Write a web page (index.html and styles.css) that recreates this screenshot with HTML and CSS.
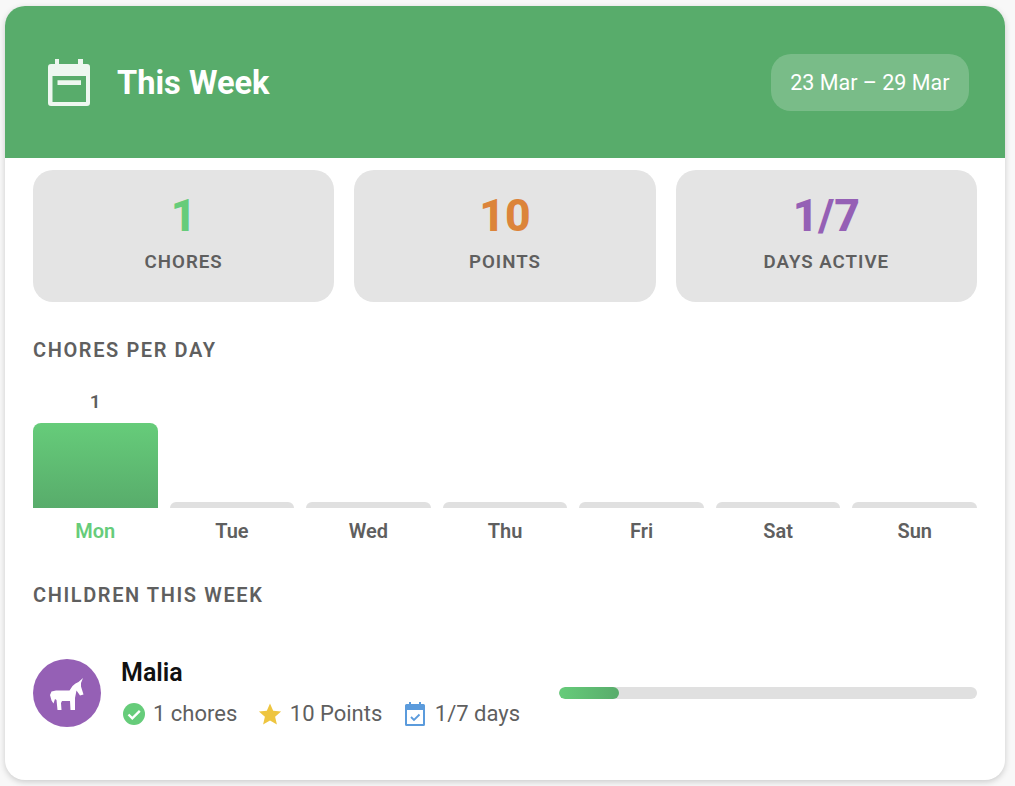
FILE: index.html
```html
<!DOCTYPE html>
<html lang="en">
<head>
<meta charset="utf-8">
<title>This Week</title>
<link rel="stylesheet" href="styles.css">
</head>
<body>
<main class="card">
  <header class="head">
    <div class="head-left">
      <svg class="head-icon" viewBox="0 0 42 47"><path fill="currentColor" fill-rule="evenodd" d="M7 0h4v5h19V0h5v5h4a3 3 0 0 1 3 3v36a3 3 0 0 1-3 3H3a3 3 0 0 1-3-3V8a3 3 0 0 1 3-3h4zM4.500 17v26h33.500V17zM9.500 21.300H33V26H9.500z"/></svg>
      <h1 class="title">This Week</h1>
    </div>
    <div class="range">23 Mar – 29 Mar</div>
  </header>
  <div class="body">
    <section class="stats">
      <div class="stat"><div class="stat-num green">1</div><div class="stat-label">CHORES</div></div>
      <div class="stat"><div class="stat-num orange">10</div><div class="stat-label">POINTS</div></div>
      <div class="stat"><div class="stat-num purple">1/7</div><div class="stat-label">DAYS ACTIVE</div></div>
    </section>
    <h2 class="section-title">CHORES PER DAY</h2>
    <section class="chart">
      <div class="day"><div class="count">1</div><div class="bar bar-on"></div><div class="day-name today">Mon</div></div>
      <div class="day"><div class="bar"></div><div class="day-name">Tue</div></div>
      <div class="day"><div class="bar"></div><div class="day-name">Wed</div></div>
      <div class="day"><div class="bar"></div><div class="day-name">Thu</div></div>
      <div class="day"><div class="bar"></div><div class="day-name">Fri</div></div>
      <div class="day"><div class="bar"></div><div class="day-name">Sat</div></div>
      <div class="day"><div class="bar"></div><div class="day-name">Sun</div></div>
    </section>
    <h2 class="section-title second">CHILDREN THIS WEEK</h2>
    <section class="child">
      <div class="avatar">
        <svg viewBox="0 0 34 32" class="unicorn"><path fill="#fff" d="M33 0 31 5V8.500L33.500 16.500 30 17.500 26.500 12.500 26 15 25 20V32H20.500L20 23H12L11 25 11.500 32H7.500L6.500 22 5 21 3.500 25.500 1.500 22.500 0 17 1.500 13.500 6 12.500H19.500L22.500 8 25.500 5.500 28.500 4z"/></svg>
      </div>
      <div class="child-info">
        <div class="child-name">Malia</div>
        <div class="meta">
          <span class="meta-item">
            <svg class="meta-icon" viewBox="0 0 24 24"><circle cx="12" cy="12" r="11" fill="#66cc7a"/><path d="M6.500 12.500l3.800 3.800 7.500-7.500" fill="none" stroke="#fff" stroke-width="2.400"/></svg>
            1 chores
          </span>
          <span class="meta-item">
            <svg class="meta-icon" viewBox="0 0 24 24"><path fill="#eec540" d="M12 1.500l3.200 7.300 7.900.7-6 5.200 1.800 7.800L12 18.400l-6.900 4.100 1.800-7.800-6-5.200 7.900-.7z"/></svg>
            10 Points
          </span>
          <span class="meta-item">
            <svg class="meta-icon" viewBox="0 0 24 24"><path fill="#5b9bdc" fill-rule="evenodd" d="M6 0h2v2h8V0h2v2h2.500A1.500 1.500 0 0 1 22 3.500v19a1.500 1.500 0 0 1-1.500 1.500h-17A1.500 1.500 0 0 1 2 22.500v-19A1.500 1.500 0 0 1 3.500 2H6zM4 8v14h16V8z"/><path d="M8 15l3 3 5.500-5.500" fill="none" stroke="#5b9bdc" stroke-width="1.800"/></svg>
            1/7 days
          </span>
        </div>
      </div>
      <div class="track"><div class="fill" style="width:14.300%"></div></div>
    </section>
  </div>
</main>
</body>
</html>
```
FILE: styles.css
```css
* { box-sizing: border-box; }
html, body { margin: 0; height: 100%; }
body {
  background: #f8f8f8;
  font-family: Roboto, "Liberation Sans", sans-serif;
  padding: 6px 10px 0 5px;
  overflow: hidden;
}
.card {
  height: 774px;
  background: #fff;
  border-radius: 20px;
  overflow: hidden;
  box-shadow: 0 2px 6px rgba(0,0,0,.18);
}
.head {
  height: 152px;
  background: #58ac6b;
  color: #fff;
  display: flex;
  align-items: center;
  justify-content: space-between;
  padding: 0 36px 0 43px;
}
.head-left { display: flex; align-items: center; gap: 27px; }
.head-icon { width: 42px; height: 47px; color: #eef7f0; display: block; }
.title { margin: 0; padding-top: 2px; font-size: 32.600px; font-weight: 700; line-height: 38px; }
.range {
  height: 57px;
  display: flex;
  align-items: center;
  padding: 0 19.500px;
  border-radius: 20px;
  background: rgba(255,255,255,.2);
  font-size: 21.500px;
}
.body { padding: 12px 28px 0; }
.stats { display: grid; grid-template-columns: repeat(3, 1fr); gap: 20px; }
.stat {
  height: 132px;
  background: #e4e4e4;
  border-radius: 20px;
  display: flex;
  flex-direction: column;
  align-items: center;
  padding-top: 19px;
}
.stat-num { font-size: 44.500px; font-weight: 800; line-height: 54px; }
.green { color: #66cc7a; }
.orange { color: #dc843a; }
.purple { color: #9560b5; }
.stat-label { font-size: 18.700px; font-weight: 600; letter-spacing: 1px; color: #5f5f5f; line-height: 24px; margin-top: 7px; }
.section-title { margin: 0; font-size: 20px; font-weight: 600; letter-spacing: 1.600px; color: #5f5f5f; line-height: 24px; }
.stats + .section-title { margin-top: 36px; }
.chart { display: grid; grid-template-columns: repeat(7, 1fr); gap: 12px; height: 158px; align-items: end; margin-top: 23px; }
.day { display: flex; flex-direction: column; align-items: stretch; }
.count { text-align: center; font-size: 19px; font-weight: 600; color: #5f5f5f; line-height: 22px; margin-bottom: 10px; }
.bar { height: 6px; background: #e0e0e0; border-radius: 8px 8px 0 0; }
.bar-on { height: 85px; background: linear-gradient(180deg, #66cc7a, #58ac6b); }
.day-name { text-align: center; font-size: 20px; font-weight: 600; color: #5f5f5f; line-height: 20px; margin-top: 13px; height: 22px; }
.today { color: #66cc7a; }
.second { margin-top: 40px; }
.child { display: flex; align-items: center; margin-top: 51px; }
.avatar {
  width: 68px; height: 68px; border-radius: 50%; background: #9560b5;
  display: flex; align-items: center; justify-content: center; flex: none;
}
.unicorn { width: 34px; height: 32px; display: block; margin-top: 2px; }
.child-info { margin-left: 20px; width: 438px; flex: none; }
.child-name { font-size: 25px; font-weight: 600; color: #111; line-height: 30px; }
.meta { display: flex; gap: 21.500px; margin-top: 13px; padding-left: 1px; font-size: 22px; color: #5f5f5f; line-height: 26px; }
.meta-item { display: flex; align-items: center; gap: 7px; }
.meta-icon { width: 24px; height: 24px; flex: none; }
.meta-item + .meta-item .meta-icon { margin: 0 1px 0 -1px; }
.track { flex: 1; height: 12px; background: #e0e0e0; border-radius: 6px; overflow: hidden; }
.fill { height: 100%; border-radius: 6px; background: linear-gradient(90deg, #66cc7a, #58ac6b); }
```
